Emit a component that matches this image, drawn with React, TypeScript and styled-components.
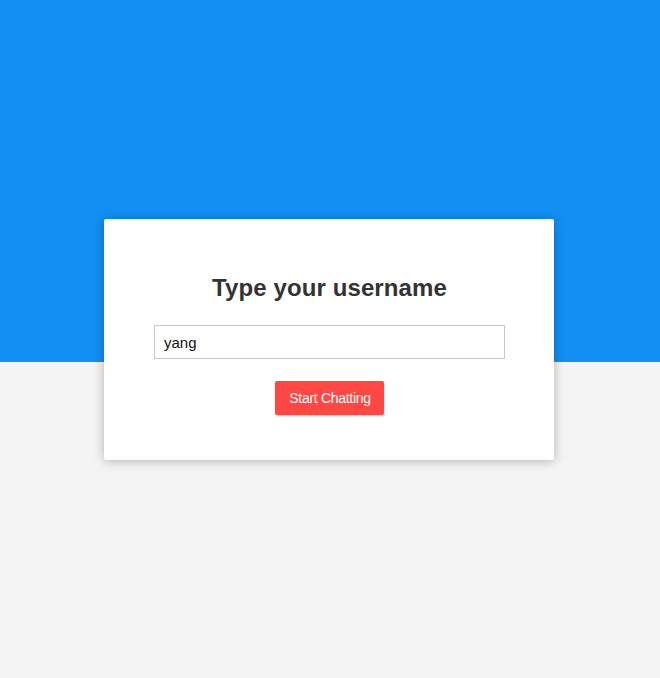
import { createGlobalStyle } from 'styled-components';
import styled from 'styled-components';

const GlobalStyle = createGlobalStyle`
  html, body {
    margin: 0;
    height: 100%;
  }
  body {
    background: linear-gradient(#128ff2 0, #128ff2 362px, #f4f4f4 362px);
    font-family: "Liberation Sans", Arial, sans-serif;
    overflow: hidden;
  }
`;

const Page = styled.div`
  display: flex;
  justify-content: center;
  padding: 219px 2px 0 0;
`;

const Card = styled.div`
  box-sizing: border-box;
  width: 450px;
  height: 241px;
  background: #fff;
  border-radius: 2px;
  box-shadow: 0 1px 11px rgba(0, 0, 0, 0.27);
  padding: 54px 49px 0 50px;
  display: flex;
  flex-direction: column;
  align-items: center;
`;

const Title = styled.h1`
  margin: 0 0 23px;
  font-size: 24px;
  line-height: 29px;
  font-weight: bold;
  letter-spacing: 0.1px;
  color: #333;
  text-align: center;
`;

const Input = styled.input`
  box-sizing: border-box;
  width: 100%;
  height: 34px;
  border: 1px solid #c8c8c8;
  border-radius: 0;
  padding: 0 9px;
  font-family: "Liberation Sans", Arial, sans-serif;
  font-size: 15px;
  color: #111;
  outline: none;
`;

const Button = styled.button`
  margin-top: 22px;
  height: 34px;
  padding: 0 13px 0 14px;
  border: none;
  border-radius: 2px;
  background: #ff4743;
  color: #fff;
  font-family: "Liberation Sans", Arial, sans-serif;
  font-size: 14px;
  letter-spacing: -0.3px;
  box-shadow: 0 1px 3px rgba(0, 0, 0, 0.12);
  cursor: pointer;
`;

export default function App() {
  return (
    <>
      <GlobalStyle />
      <Page>
        <Card>
          <Title>Type your username</Title>
          <Input type="text" defaultValue="yang" />
          <Button type="button">Start Chatting</Button>
        </Card>
      </Page>
    </>
  );
}
